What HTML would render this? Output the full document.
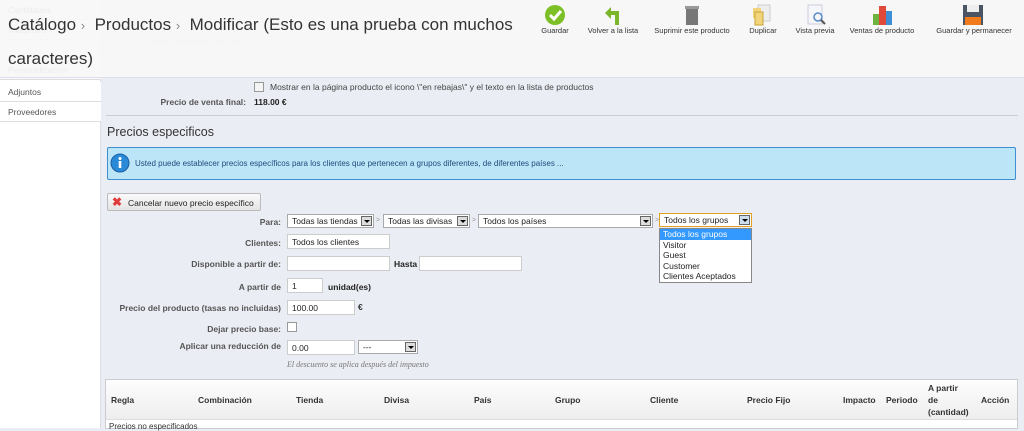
<!DOCTYPE html>
<html><head><meta charset="utf-8"><style>
*{box-sizing:border-box;margin:0;padding:0}
body{width:1024px;height:428px;overflow:hidden;background:#ebedf4;font-family:"Liberation Sans",Arial,sans-serif;font-size:9px;color:#333;position:relative}
.abs{position:absolute}
.side{left:0;top:0;width:101px;height:428px;background:#fff;border-right:1px solid #ddd}
.side div{position:absolute;left:0;width:101px;height:20px;border-bottom:1px solid #ddd;padding:5px 8px;color:#555;font-size:8.5px;background:#fafafa}
.hdr{left:0;top:0;width:1024px;height:78px;background:rgba(248,248,248,.93);border-bottom:1px solid #dde}
.lbl{position:absolute;text-align:right;color:#555;font-weight:bold;font-size:8.5px}
.inp{position:absolute;background:#fff;border:1px solid #ccc;height:15px;padding:2px 4px;font-size:8.5px;color:#222}
.sel{position:absolute;background:#fff;border:1px solid #aaa;height:14px;padding:1px 4px;font-size:8.5px;color:#222}
.sel i{position:absolute;right:1px;top:1px;width:11px;height:10px;background:#ddd;border:1px solid #666}
.sel i:after{content:"";position:absolute;left:2px;top:3px;border:3px solid transparent;border-top:3px solid #000}
.gt{position:absolute;color:#999;font-size:7px}
.tb{position:absolute;top:26px;font-size:7.5px;color:#333;text-align:center}
</style></head><body>
<div class="abs side">
<div style="top:0px">Cantidades</div>
<div style="top:20px">Imágenes</div>
<div style="top:60px">Personalización</div>
<div style="top:82px;background:#fff">Adjuntos</div>
<div style="top:102px;background:#fff">Proveedores</div>
</div>
<div class="abs" style="left:105px;top:0;width:900px;color:#ccc;font-size:8.5px">
<div class="abs" style="left:40px;top:36px;font-weight:bold;white-space:nowrap">Precio de venta con IVA:</div>
<div class="abs" style="left:78px;top:50px;white-space:nowrap">Precio unitario:</div>
</div>
<div class="abs hdr"></div>
<div class="abs" style="left:8px;top:8px;font-size:17px;color:#333;line-height:33px">Catálogo <span style="color:#888;font-size:13px">›</span> &nbsp;Productos <span style="color:#888;font-size:13px">›</span> &nbsp;Modificar (Esto es una prueba con muchos<br>caracteres)</div>
<svg class="abs" style="left:544px;top:4px" width="22" height="22"><circle cx="11" cy="11" r="10" fill="#7cbf26"/><path d="M6 11l4 4 7-8" stroke="#fff" stroke-width="3" fill="none"/></svg>
<svg class="abs" style="left:603px;top:4px" width="20" height="22"><path d="M14 21V9H6" stroke="#7bb52a" stroke-width="4" fill="none"/><path d="M2 9l6-6v12z" fill="#7bb52a"/></svg>
<svg class="abs" style="left:684px;top:4px" width="16" height="22"><rect x="2" y="4" width="12" height="17" fill="#777"/><rect x="1" y="2" width="14" height="3" fill="#999"/></svg>
<svg class="abs" style="left:751px;top:4px" width="22" height="22"><rect x="7" y="1" width="12" height="16" fill="#eee" stroke="#ccc"/><rect x="2" y="4" width="8" height="10" fill="#f2d57a"/><rect x="4" y="8" width="8" height="13" fill="#f2d57a" stroke="#c9a43a"/></svg>
<svg class="abs" style="left:806px;top:4px" width="22" height="22"><rect x="2" y="1" width="14" height="19" fill="#f4f6fa" stroke="#ccd"/><circle cx="12" cy="13" r="4" fill="none" stroke="#5a8ac8" stroke-width="1.5"/><path d="M15 16l4 4" stroke="#555" stroke-width="2"/></svg>
<svg class="abs" style="left:872px;top:4px" width="22" height="22"><rect x="1" y="10" width="6" height="11" fill="#6cb33f"/><rect x="7" y="2" width="7" height="19" fill="#e04a3a"/><rect x="14" y="7" width="6" height="14" fill="#3f8fd6"/></svg>
<svg class="abs" style="left:962px;top:4px" width="22" height="22"><rect x="1" y="1" width="20" height="20" fill="#4a5563"/><rect x="5" y="1" width="12" height="7" fill="#eee"/><rect x="3" y="13" width="16" height="8" fill="#f07b1a"/></svg>
<div class="tb" style="left:536px;width:38px">Guardar</div>
<div class="tb" style="left:582px;width:62px">Volver a la lista</div>
<div class="tb" style="left:650px;width:84px">Suprimir este producto</div>
<div class="tb" style="left:744px;width:38px">Duplicar</div>
<div class="tb" style="left:790px;width:50px">Vista previa</div>
<div class="tb" style="left:844px;width:76px">Ventas de producto</div>
<div class="tb" style="left:928px;width:92px">Guardar y permanecer</div>
<div class="abs" style="left:254px;top:82px;width:10px;height:10px;border:1px solid #999;background:#f4f4f4"></div>
<div class="abs" style="left:270px;top:82px;font-size:8.5px;color:#444">Mostrar en la página producto el icono \"en rebajas\" y el texto en la lista de productos</div>
<div class="lbl" style="left:100px;width:146px;top:97px">Precio de venta final:</div>
<div class="abs" style="left:254px;top:97px;font-weight:bold;font-size:8.5px;color:#222">118.00 €</div>
<div class="abs" style="left:106px;top:115px;width:912px;border-top:1px solid #ccc"></div>
<div class="abs" style="left:107px;top:125px;font-size:12.5px;color:#333">Precios especificos</div>
<div class="abs" style="left:107px;top:147px;width:909px;height:33px;background:#bde5f8;border:1px solid #3d8fcf;border-radius:2px"></div>
<svg class="abs" style="left:110px;top:153px" width="20" height="20"><circle cx="10" cy="10" r="9" fill="#2a8ad8" stroke="#1a5fa0"/><rect x="8.7" y="8" width="2.6" height="7" fill="#fff"/><circle cx="10" cy="5.5" r="1.5" fill="#fff"/></svg>
<div class="abs" style="left:135px;top:159px;font-size:8px;color:#1d4a7a">Usted puede establecer precios específicos para los clientes que pertenecen a grupos diferentes, de diferentes países ...</div>
<div class="abs" style="left:107px;top:193px;width:154px;height:18px;background:linear-gradient(#fafafa,#e4e4e4);border:1px solid #bbb;border-radius:2px;font-size:8.5px;padding:4px 0 0 20px;color:#222">Cancelar nuevo precio específico</div>
<div class="abs" style="left:112px;top:196px;color:#e03b3b;font-size:12px;font-weight:bold;line-height:12px">✖</div>
<div class="lbl" style="left:100px;width:181px;top:217px">Para:</div>
<div class="sel" style="left:287px;top:214px;width:87px">Todas las tiendas<i></i></div>
<div class="gt" style="left:376px;top:217px">&gt;</div>
<div class="sel" style="left:383px;top:214px;width:87px">Todas las divisas<i></i></div>
<div class="gt" style="left:472px;top:217px">&gt;</div>
<div class="sel" style="left:478px;top:214px;width:175px">Todos los países<i></i></div>
<div class="gt" style="left:655px;top:217px">&gt;</div>
<div class="sel" style="left:659px;top:213px;width:93px;border-color:#e0a020">Todos los grupos<i style="background:#cde"></i></div>
<div class="abs" style="left:659px;top:228px;width:93px;height:55px;background:#fff;border:1px solid #888;font-size:8.5px;line-height:10.6px;color:#222">
<div style="background:#3399ff;color:#fff;padding-left:3px">Todos los grupos</div>
<div style="padding-left:3px">Visitor</div><div style="padding-left:3px">Guest</div><div style="padding-left:3px">Customer</div><div style="padding-left:3px">Clientes Aceptados</div></div>
<div class="lbl" style="left:100px;width:181px;top:238px">Clientes:</div>
<div class="inp" style="left:287px;top:234px;width:103px">Todos los clientes</div>
<div class="lbl" style="left:100px;width:181px;top:259px">Disponible a partir de:</div>
<div class="inp" style="left:287px;top:256px;width:103px"></div>
<div class="abs" style="left:394px;top:259px;font-weight:bold;font-size:8.5px;color:#222">Hasta</div>
<div class="inp" style="left:419px;top:256px;width:103px"></div>
<div class="lbl" style="left:100px;width:181px;top:282px">A partir de</div>
<div class="inp" style="left:287px;top:278px;width:36px">1</div>
<div class="abs" style="left:328px;top:282px;font-weight:bold;font-size:8.5px;color:#222">unidad(es)</div>
<div class="lbl" style="left:100px;width:181px;top:303px">Precio del producto (tasas no incluidas)</div>
<div class="inp" style="left:287px;top:300px;width:68px">100.00</div>
<div class="abs" style="left:358px;top:302px;font-weight:bold;font-size:8.5px">€</div>
<div class="lbl" style="left:100px;width:181px;top:324px">Dejar precio base:</div>
<div class="abs" style="left:287px;top:322px;width:10px;height:10px;border:1px solid #999;background:#fff"></div>
<div class="lbl" style="left:100px;width:181px;top:341px">Aplicar una reducción de</div>
<div class="inp" style="left:287px;top:340px;width:68px">0.00</div>
<div class="sel" style="left:358px;top:340px;width:60px">---<i></i></div>
<div class="abs" style="left:287px;top:360px;font-family:'Liberation Serif',serif;font-style:italic;font-size:8px;color:#777">El descuento se aplica después del impuesto</div>
<div class="abs" style="left:105px;top:379px;width:913px;height:50px;background:#fff;border:1px solid #ccc"></div>
<div class="abs" style="left:106px;top:380px;width:911px;height:40px;background:linear-gradient(#fdfdfd,#eee);border-bottom:1px solid #ddd"></div>
<div class="abs" style="top:395px;left:0;width:1024px;font-weight:bold;font-size:8.5px;color:#333">
<span class="abs" style="left:111px">Regla</span><span class="abs" style="left:198px">Combinación</span><span class="abs" style="left:296px">Tienda</span><span class="abs" style="left:384px">Divisa</span><span class="abs" style="left:474px">País</span><span class="abs" style="left:555px">Grupo</span><span class="abs" style="left:650px">Cliente</span><span class="abs" style="left:747px">Precio Fijo</span><span class="abs" style="left:843px">Impacto</span><span class="abs" style="left:886px">Periodo</span><span class="abs" style="left:981px">Acción</span>
<span class="abs" style="left:928px;top:-13px;line-height:12px">A partir<br>de<br>(cantidad)</span></div>
<div class="abs" style="left:109px;top:422px;font-size:8px;color:#333">Precios no especificados</div>
</body></html>
